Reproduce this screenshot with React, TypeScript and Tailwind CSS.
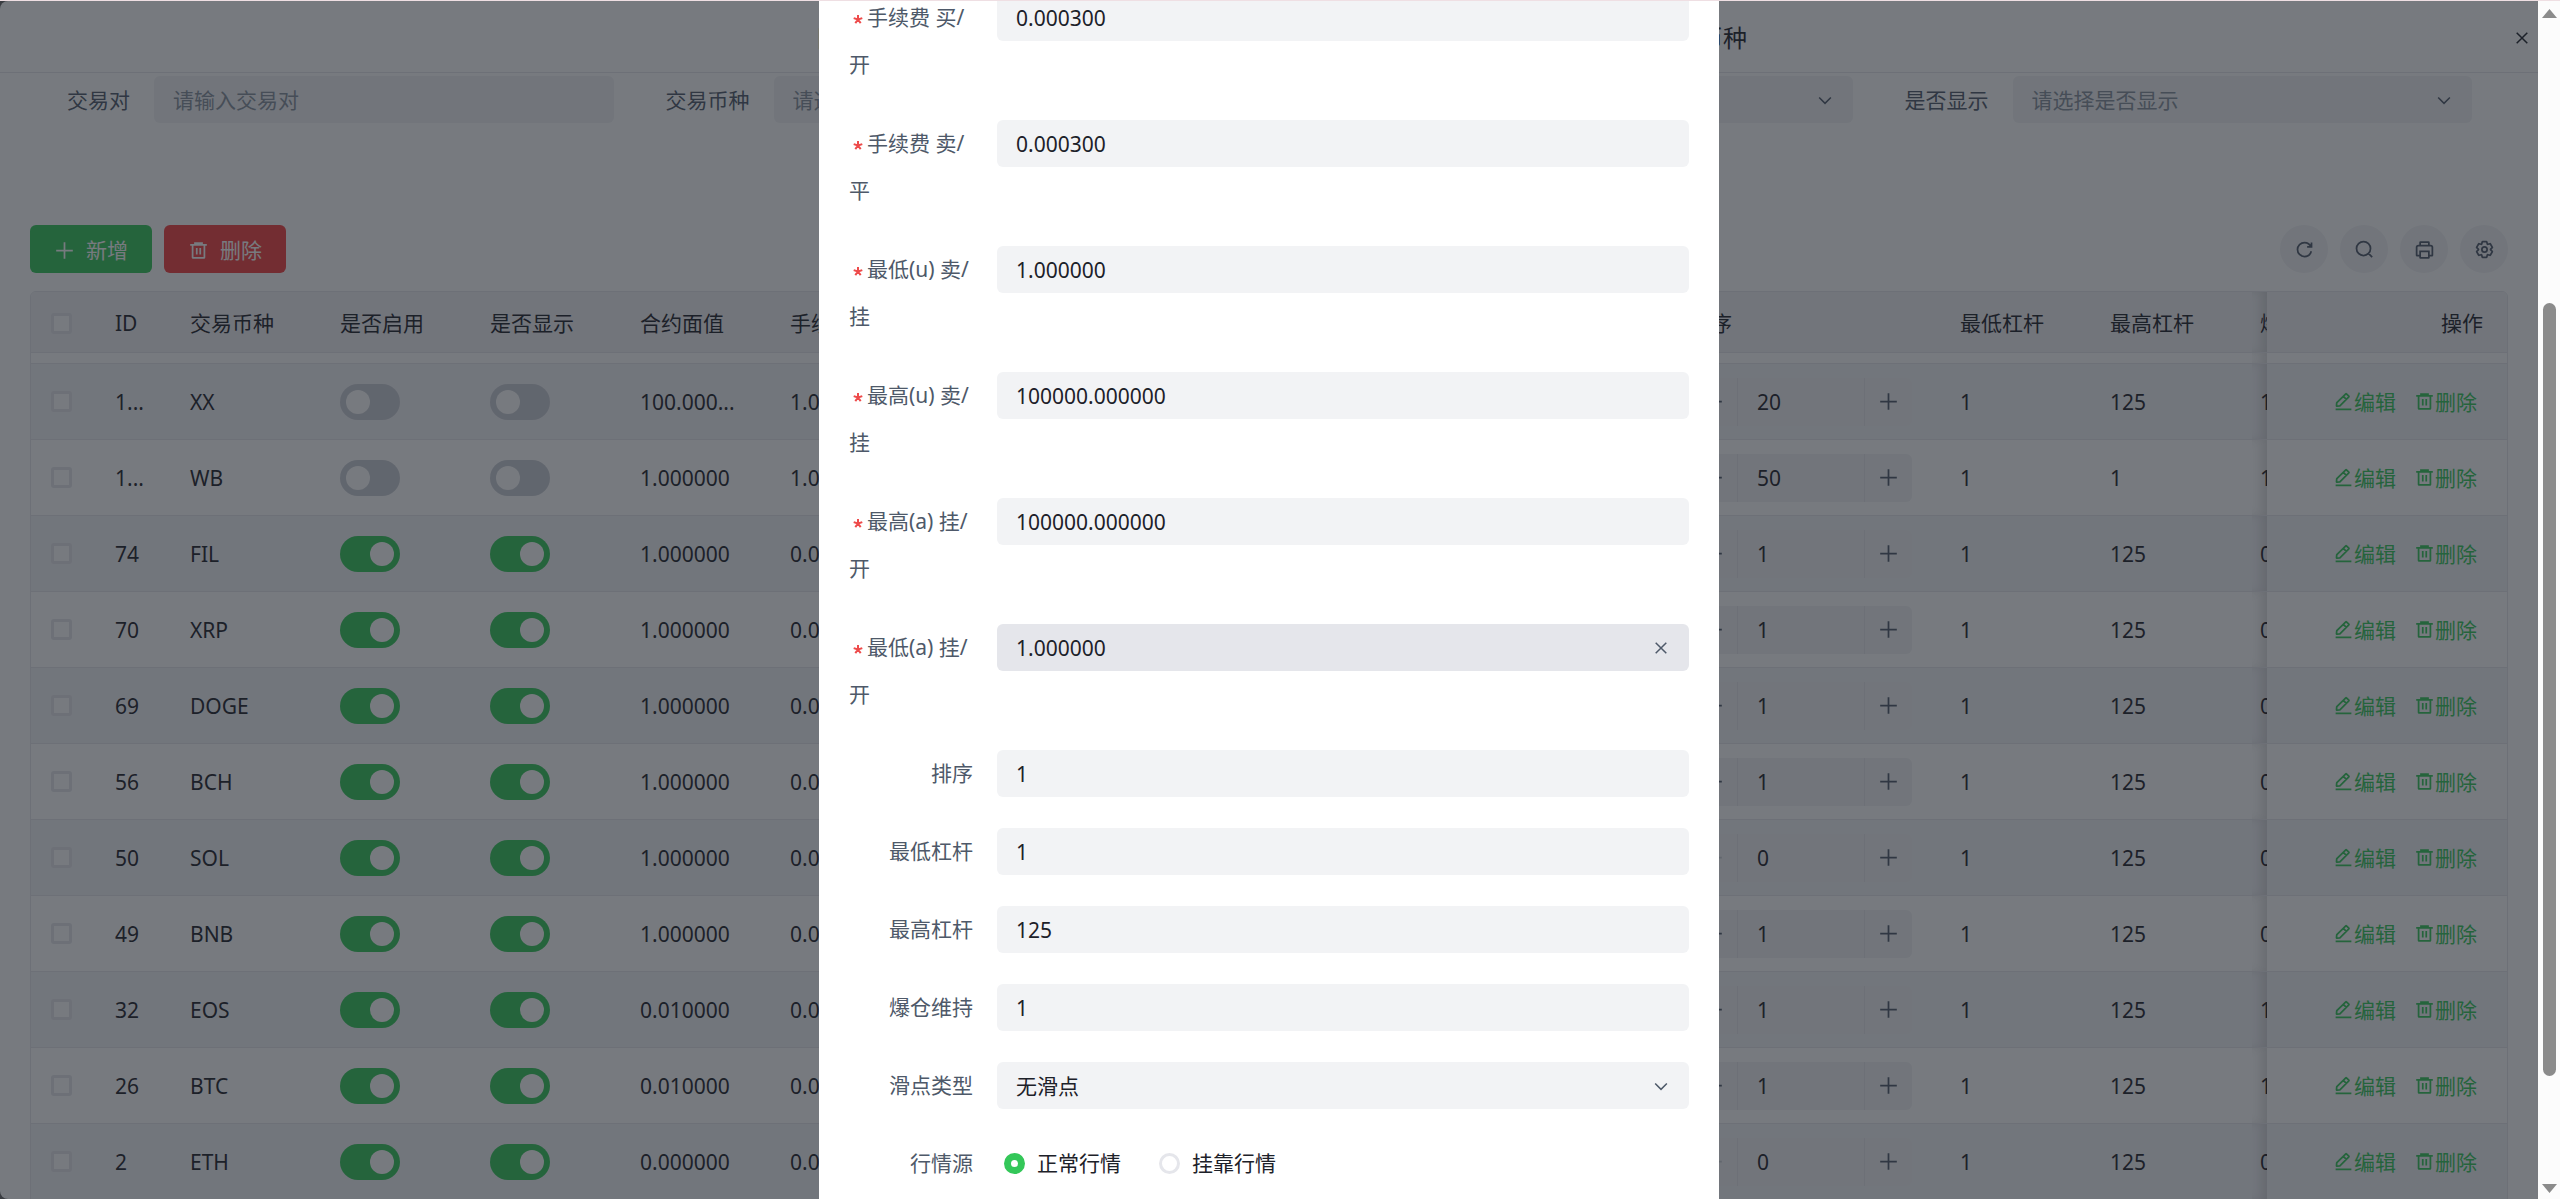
import { useState } from 'react';
import type { ReactNode } from 'react';

const ICONS = {
  plus: 'M5 24h38M24 5v38',
  minus: 'M5 24h38',
  close: 'M9.857 9.858 24 24m0 0 14.142 14.142M24 24 38.142 9.858M24 24 9.857 38.142',
  down: 'M39.6 17.443 24.043 33 8.487 17.443',
  remove:
    'M5 11h5.5m0 0v29a1 1 0 0 0 1 1h25a1 1 0 0 0 1-1V11m-27 0H16m21.5 0H43m-5.5 0H32m-16 0V7h16v4m-16 0h16M20 18v15m8-15v15',
  edit:
    'm30.48 19.038 5.733-5.734a1 1 0 0 0 0-1.414l-5.586-5.586a1 1 0 0 0-1.414 0l-5.734 5.734m7 7L15.763 33.754a1 1 0 0 1-.59.286l-6.048.708a1 1 0 0 1-1.113-1.069l.477-6.31a1 1 0 0 1 .29-.631l14.7-14.7m7 7-7-7M6 42h36',
  refresh:
    'M38.837 18C36.463 12.136 30.715 8 24 8 15.163 8 8 15.163 8 24s7.163 16 16 16c7.455 0 13.72-5.1 15.496-12M40 8v10H30',
  search:
    'M33.072 33.071c6.248-6.248 6.248-16.379 0-22.627-6.249-6.249-16.38-6.249-22.628 0-6.248 6.248-6.248 16.379 0 22.627 6.248 6.248 16.38 6.248 22.628 0Zm0 0 8.485 8.485',
  printer:
    'M14 15V8a1 1 0 0 1 1-1h18a1 1 0 0 1 1 1v7M14 38H7a1 1 0 0 1-1-1V19a4 4 0 0 1 4-4h28a4 4 0 0 1 4 4v18a1 1 0 0 1-1 1h-7M14 28h20v14a1 1 0 0 1-1 1H15a1 1 0 0 1-1-1V28Z',
  setting:
    'M18.797 6.732A1 1 0 0 1 19.76 6h8.48a1 1 0 0 1 .964.732l1.285 4.628a1 1 0 0 0 1.213.7l4.651-1.2a1 1 0 0 1 1.116.468l4.24 7.344a1 1 0 0 1-.153 1.2L38.193 23.3a1 1 0 0 0 0 1.402l3.364 3.427a1 1 0 0 1 .153 1.2l-4.24 7.344a1 1 0 0 1-1.116.468l-4.65-1.2a1 1 0 0 0-1.214.7l-1.285 4.628a1 1 0 0 1-.964.732h-8.48a1 1 0 0 1-.963-.732L17.51 36.64a1 1 0 0 0-1.213-.7l-4.65 1.2a1 1 0 0 1-1.116-.468l-4.24-7.344a1 1 0 0 1 .153-1.2L9.809 24.7a1 1 0 0 0 0-1.402l-3.364-3.427a1 1 0 0 1-.153-1.2l4.24-7.344a1 1 0 0 1 1.116-.468l4.65 1.2a1 1 0 0 0 1.213-.7l1.286-4.628ZM30 24a6 6 0 1 1-12 0 6 6 0 0 1 12 0Z',
};

interface IconProps {
  name: keyof typeof ICONS;
  className?: string;
}

function Icon({ name, className = 'size-[21px]' }: IconProps) {
  return (
    <svg viewBox="0 0 48 48" fill="none" stroke="currentColor" strokeWidth="4" className={`shrink-0 ${className}`} aria-hidden="true">
      <path d={ICONS[name]} />
    </svg>
  );
}

interface Coin {
  id: string;
  symbol: string;
  enabled: boolean;
  faceValue: string;
  fee: string;
  sort: number;
  maxLever: string;
  keep: string;
}

const COINS: Coin[] = [
  { id: '1...', symbol: 'XX', enabled: false, faceValue: '100.000...', fee: '1.000000', sort: 20, maxLever: '125', keep: '1' },
  { id: '1...', symbol: 'WB', enabled: false, faceValue: '1.000000', fee: '1.000000', sort: 50, maxLever: '1', keep: '1' },
  { id: '74', symbol: 'FIL', enabled: true, faceValue: '1.000000', fee: '0.000300', sort: 1, maxLever: '125', keep: '0' },
  { id: '70', symbol: 'XRP', enabled: true, faceValue: '1.000000', fee: '0.000300', sort: 1, maxLever: '125', keep: '0' },
  { id: '69', symbol: 'DOGE', enabled: true, faceValue: '1.000000', fee: '0.000300', sort: 1, maxLever: '125', keep: '0' },
  { id: '56', symbol: 'BCH', enabled: true, faceValue: '1.000000', fee: '0.000300', sort: 1, maxLever: '125', keep: '0' },
  { id: '50', symbol: 'SOL', enabled: true, faceValue: '1.000000', fee: '0.000300', sort: 0, maxLever: '125', keep: '0' },
  { id: '49', symbol: 'BNB', enabled: true, faceValue: '1.000000', fee: '0.000300', sort: 1, maxLever: '125', keep: '0' },
  { id: '32', symbol: 'EOS', enabled: true, faceValue: '0.010000', fee: '0.000300', sort: 1, maxLever: '125', keep: '1' },
  { id: '26', symbol: 'BTC', enabled: true, faceValue: '0.010000', fee: '0.000300', sort: 1, maxLever: '125', keep: '1' },
  { id: '2', symbol: 'ETH', enabled: true, faceValue: '0.000000', fee: '0.000300', sort: 0, maxLever: '125', keep: '0' },
];

const LIMIT_COLUMNS = ['手续费 卖/平', '最低(u)', '最高(u)', '最高(a)', '最低(a)'];

const FIXED_CELL =
  'sticky right-0 z-10 before:pointer-events-none before:absolute before:inset-y-0 before:-left-[15px] before:w-[15px] before:shadow-[inset_-9px_0_12px_-4px_rgba(0,0,0,0.15)]';

function Switch({ initial, label }: { initial: boolean; label: string }) {
  const [on, setOn] = useState(initial);

  return (
    <button
      type="button"
      role="switch"
      aria-checked={on}
      aria-label={label}
      onClick={() => setOn(!on)}
      className={`flex h-9 w-[60px] items-center rounded-full px-1.5 ${on ? 'justify-end bg-[#34c759]' : 'justify-start bg-[#c9cdd4]'}`}
    >
      <span className="size-6 rounded-full bg-white" />
    </button>
  );
}

function SortInput({ initial, label }: { initial: number; label: string }) {
  const [value, setValue] = useState(initial);

  return (
    <div className="flex h-12 items-stretch overflow-hidden rounded-md bg-[#f2f3f5] text-[#4e5969]">
      <button
        type="button"
        aria-label="减少"
        disabled={value === 0}
        onClick={() => setValue(value - 1)}
        className="flex w-12 items-center justify-center border-r border-[#e5e6eb] disabled:text-[#c9cdd4]"
      >
        <Icon name="minus" />
      </button>
      <input
        aria-label={label}
        value={value}
        onChange={(e) => setValue(Number(e.target.value) || 0)}
        className="w-0 min-w-0 flex-1 bg-transparent pl-[19px] text-[#1d2129] outline-none"
      />
      <button
        type="button"
        aria-label="增加"
        onClick={() => setValue(value + 1)}
        className="flex w-12 items-center justify-center border-l border-[#e5e6eb]"
      >
        <Icon name="plus" />
      </button>
    </div>
  );
}

function Check({ label }: { label: string }) {
  return (
    <input
      type="checkbox"
      aria-label={label}
      className="block size-[21px] appearance-none rounded-[3px] border-3 border-[#e5e6eb] bg-white checked:bg-[#34c759]"
    />
  );
}

interface FilterFieldProps {
  id: string;
  label: string;
  placeholder: string;
  select?: boolean;
}

function FilterField({ id, label, placeholder, select }: FilterFieldProps) {
  return (
    <div className="flex h-[47px] items-center pr-9">
      <label htmlFor={id} className="w-[124px] shrink-0 pr-6 text-right text-[#4e5969]">{label}</label>
      {select ? (
        <div className="relative h-full flex-1">
          <select id={id} className="size-full appearance-none rounded-md bg-[#f2f3f5] px-[19px] text-[#86909c] outline-none">
            <option>{placeholder}</option>
          </select>
          <Icon name="down" className="pointer-events-none absolute inset-y-0 right-[19px] my-auto size-[18px] text-[#4e5969]" />
        </div>
      ) : (
        <input
          id={id}
          placeholder={placeholder}
          className="h-full min-w-0 flex-1 rounded-md bg-[#f2f3f5] px-[19px] outline-none placeholder:text-[#86909c]"
        />
      )}
    </div>
  );
}

function CoinTable() {
  return (
    <div className="mt-[18px] overflow-hidden rounded-t-md border border-[#e5e6eb]">
      <table className="w-[2595px] min-w-full table-fixed border-separate border-spacing-0 text-left">
        <colgroup>
          <col className="w-[60px]" />
          <col className="w-[75px]" />
          <col span={10} className="w-[150px]" />
          <col className="w-[270px]" />
          <col span={3} className="w-[150px]" />
          <col className="w-[240px]" />
        </colgroup>
        <thead>
          <tr className="h-[61px] *:border-b *:border-[#e5e6eb] *:bg-[#f2f3f5] *:pt-0.5 *:font-normal *:whitespace-nowrap">
            <th className="pl-5"><Check label="全选" /></th>
            <th className="px-6">ID</th>
            <th className="px-6">交易币种</th>
            <th className="px-6">是否启用</th>
            <th className="px-6">是否显示</th>
            <th className="px-6">合约面值</th>
            <th className="px-6">手续费</th>
            {LIMIT_COLUMNS.map((name) => (
              <th key={name} className="px-6">{name}</th>
            ))}
            <th className="px-6">排序</th>
            <th className="px-6">最低杠杆</th>
            <th className="px-6">最高杠杆</th>
            <th className="px-6">爆仓维持</th>
            <th className={`px-6 text-right ${FIXED_CELL}`}>操作</th>
          </tr>
        </thead>
        <tbody>
          {/* tail of the row that is scrolled under the header */}
          <tr className="h-[11px] *:border-b *:border-[#e5e6eb] *:bg-white">
            <td colSpan={16} />
            <td className={FIXED_CELL} />
          </tr>
          {COINS.map((coin) => (
            <tr
              key={coin.symbol}
              className="h-[76px] *:border-b *:border-[#e5e6eb] *:bg-white *:whitespace-nowrap even:*:bg-[#f3f4f8]"
            >
              <td className="pl-5"><Check label={`选择 ${coin.symbol}`} /></td>
              <td className="pl-6">{coin.id}</td>
              <td className="px-6">{coin.symbol}</td>
              <td className="px-6"><Switch initial={coin.enabled} label={`${coin.symbol} 是否启用`} /></td>
              <td className="px-6"><Switch initial={coin.enabled} label={`${coin.symbol} 是否显示`} /></td>
              <td className="px-6">{coin.faceValue}</td>
              <td className="px-6">{coin.fee}</td>
              {LIMIT_COLUMNS.map((name) => (
                <td key={name} className="px-6">{coin.fee}</td>
              ))}
              <td className="px-6"><SortInput initial={coin.sort} label={`${coin.symbol} 排序`} /></td>
              <td className="px-6">1</td>
              <td className="px-6">{coin.maxLever}</td>
              <td className="px-6">{coin.keep}</td>
              <td className={`pr-6 ${FIXED_CELL}`}>
                <div className="flex justify-end gap-1.5 text-[#34c759]">
                  <a href="#edit" className="flex items-center px-1.5"><Icon name="edit" />编辑</a>
                  <a href="#delete" className="flex items-center px-1.5"><Icon name="remove" />删除</a>
                </div>
              </td>
            </tr>
          ))}
        </tbody>
      </table>
    </div>
  );
}

function Asterisk() {
  return (
    <svg viewBox="0 0 18 18" stroke="#ee4b4b" strokeWidth="2" className="inline size-[18px] align-[-3px]" aria-hidden="true">
      <path d="M9 9.500V5M9 9.500l4.300-1.400M9 9.500l2.700 3.700M9 9.500l-2.700 3.700M9 9.500 4.700 8.100" />
    </svg>
  );
}

interface FormRowProps {
  label: string;
  htmlFor?: string;
  required?: boolean;
  children: ReactNode;
}

function FormRow({ label, htmlFor, required, children }: FormRowProps) {
  return (
    <div className="flex items-start">
      <label
        htmlFor={htmlFor}
        className={`mr-6 w-[124px] shrink-0 leading-[47px] text-[#4e5969] ${required ? 'h-[126px] text-left' : 'h-[78px] text-right'}`}
      >
        {required && <Asterisk />}
        {label}
      </label>
      <div className="flex h-12 min-w-0 flex-1 items-start">{children}</div>
    </div>
  );
}

const TEXT_FIELDS = [
  { id: 'fee-open', label: '手续费 买/开', value: '0.000300', required: true },
  { id: 'fee-close', label: '手续费 卖/平', value: '0.000300', required: true },
  { id: 'min-u', label: '最低(u) 卖/挂', value: '1.000000', required: true },
  { id: 'max-u', label: '最高(u) 卖/挂', value: '100000.000000', required: true },
  { id: 'max-a', label: '最高(a) 挂/开', value: '100000.000000', required: true },
  { id: 'min-a', label: '最低(a) 挂/开', value: '1.000000', required: true, active: true },
  { id: 'sort', label: '排序', value: '1' },
  { id: 'min-lever', label: '最低杠杆', value: '1' },
  { id: 'max-lever', label: '最高杠杆', value: '125' },
  { id: 'keep', label: '爆仓维持', value: '1' },
];

const RADIO =
  'size-[21px] appearance-none rounded-full border-3 border-[#e5e6eb] bg-white checked:border-7 checked:border-[#34c759]';

function EditModal() {
  return (
    <div role="dialog" aria-label="编辑" className="w-[900px] overflow-hidden bg-white px-[30px]">
      <form className="-mt-[7px]">
        {TEXT_FIELDS.map((field) => (
          <FormRow key={field.id} label={field.label} htmlFor={field.id} required={field.required}>
            <div className={`flex h-[47px] w-full items-center rounded-md px-[19px] ${field.active ? 'bg-[#e5e6eb]' : 'bg-[#f2f3f5]'}`}>
              <input id={field.id} defaultValue={field.value} className="min-w-0 flex-1 bg-transparent outline-none" />
              {field.active && (
                <button type="button" aria-label="清空" className="text-[#4e5969]">
                  <Icon name="close" className="size-[18px]" />
                </button>
              )}
            </div>
          </FormRow>
        ))}
        <FormRow label="滑点类型" htmlFor="slip">
          <div className="relative h-[47px] w-full">
            <select id="slip" className="size-full appearance-none rounded-md bg-[#f2f3f5] px-[19px] outline-none">
              <option>无滑点</option>
            </select>
            <Icon name="down" className="pointer-events-none absolute inset-y-0 right-[19px] my-auto size-[18px] text-[#4e5969]" />
          </div>
        </FormRow>
        <FormRow label="行情源">
          <div className="flex h-[46px] items-center gap-[38px] pl-[7px]">
            <label className="flex items-center gap-3">
              <input type="radio" name="source" defaultChecked className={RADIO} />
              正常行情
            </label>
            <label className="flex items-center gap-3">
              <input type="radio" name="source" className={RADIO} />
              挂靠行情
            </label>
          </div>
        </FormRow>
      </form>
    </div>
  );
}

function Scrollbar() {
  return (
    <div className="flex w-[22px] shrink-0 flex-col items-center bg-[#fcfcfc] pt-2 pb-1.5" aria-hidden="true">
      <svg viewBox="0 0 15 9" className="h-[9px] w-[15px]" fill="#8b8b8b"><path d="M0 9 7.500 0 15 9Z" /></svg>
      <div className="flex w-full flex-1 flex-col items-center">
        <div className="grow-[285]" />
        <div className="w-[13px] grow-[773] rounded-full bg-[#8b8b8b]" />
        <div className="grow-[108]" />
      </div>
      <svg viewBox="0 0 15 9" className="h-[9px] w-[15px]" fill="#8b8b8b"><path d="M0 0h15L7.500 9Z" /></svg>
    </div>
  );
}

const TOOLS: { name: keyof typeof ICONS; label: string }[] = [
  { name: 'refresh', label: '刷新' },
  { name: 'search', label: '搜索' },
  { name: 'printer', label: '打印' },
  { name: 'setting', label: '设置' },
];

export default function App() {
  return (
    <div className="flex h-screen flex-col overflow-hidden border-t border-[#efdfe3] font-['Noto_Sans','Noto_Sans_CJK_SC',sans-serif] text-[21px] leading-[32px] text-[#1d2129]">
      <div className="flex min-h-0 flex-1">
        <div className="relative flex min-w-0 flex-1 bg-[#666]">
          <section className="min-w-0 flex-1 overflow-hidden rounded-l-lg bg-white">
            <header className="relative flex h-[72px] items-center justify-center border-b border-[#e5e6eb] pt-0.5 pl-6">
              <h1 className="flex w-[932px] justify-between text-2xl">
                <span>日</span>
                <span>交易币种</span>
              </h1>
              <button type="button" aria-label="关闭" className="absolute right-[7px]">
                <Icon name="close" className="size-[18px]" />
              </button>
            </header>
            <div className="px-[30px] pt-[3px]">
              <form className="grid grid-cols-4">
                <FilterField id="pair" label="交易对" placeholder="请输入交易对" />
                <FilterField id="coin" label="交易币种" placeholder="请选择交易币种" select />
                <FilterField id="enabled" label="是否启用" placeholder="请选择是否启用" select />
                <FilterField id="visible" label="是否显示" placeholder="请选择是否显示" select />
              </form>
              <div className="mt-[102px] flex justify-between">
                <div className="flex gap-3">
                  <button type="button" className="flex h-12 items-center gap-[11px] rounded-md bg-[#34c759] px-6 pt-0.5 text-white">
                    <Icon name="plus" />新增
                  </button>
                  <button type="button" className="flex h-12 items-center gap-[11px] rounded-md bg-[#f53f3f] px-6 pt-0.5 text-white">
                    <Icon name="remove" />删除
                  </button>
                </div>
                <div className="flex gap-3">
                  {TOOLS.map((tool) => (
                    <button
                      key={tool.name}
                      type="button"
                      aria-label={tool.label}
                      className="flex size-12 items-center justify-center rounded-full bg-[#f2f3f5] text-[#4e5969]"
                    >
                      <Icon name={tool.name} />
                    </button>
                  ))}
                </div>
              </div>
              <CoinTable />
            </div>
          </section>
          <div className="absolute inset-0 z-20 flex justify-center bg-[#1d2129]/60">
            <EditModal />
          </div>
        </div>
        <Scrollbar />
      </div>
    </div>
  );
}
